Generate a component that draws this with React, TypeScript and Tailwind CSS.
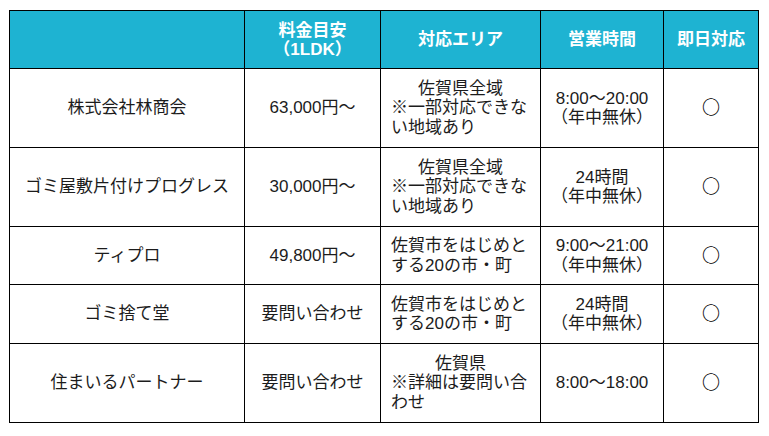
import React from "react";

type Row = {
  name: string;
  price: string;
  area: { head?: string; body: string };
  hours: string[];
  h: string;
};

const rows: Row[] = [
  {
    name: "株式会社林商会",
    price: "63,000円〜",
    area: { head: "佐賀県全域", body: "※一部対応できない地域あり" },
    hours: ["8:00〜20:00", "（年中無休）"],
    h: "h-[79px]",
  },
  {
    name: "ゴミ屋敷片付けプログレス",
    price: "30,000円〜",
    area: { head: "佐賀県全域", body: "※一部対応できない地域あり" },
    hours: ["24時間", "（年中無休）"],
    h: "h-[79px]",
  },
  {
    name: "ティプロ",
    price: "49,800円〜",
    area: { body: "佐賀市をはじめとする20の市・町" },
    hours: ["9:00〜21:00", "（年中無休）"],
    h: "h-[58px]",
  },
  {
    name: "ゴミ捨て堂",
    price: "要問い合わせ",
    area: { body: "佐賀市をはじめとする20の市・町" },
    hours: ["24時間", "（年中無休）"],
    h: "h-[59px]",
  },
  {
    name: "住まいるパートナー",
    price: "要問い合わせ",
    area: { head: "佐賀県", body: "※詳細は要問い合わせ" },
    hours: ["8:00〜18:00"],
    h: "h-[79px]",
  },
];

export default function App() {
  return (
    <div
      className="min-h-[436px] w-[769px] bg-white pl-[9px] pt-[10px]"
      style={{ fontFamily: '"Liberation Sans", "Noto Sans CJK JP", sans-serif' }}
    >
      <table className="w-[749px] table-fixed border-collapse text-[17px] leading-[19.5px] text-[#1c1c1c]">
        <colgroup>
          <col className="w-[235px]" />
          <col className="w-[136px]" />
          <col className="w-[160px]" />
          <col className="w-[123px]" />
          <col className="w-[95px]" />
        </colgroup>
        <thead>
          <tr className="bg-[#1eb3d2] text-white font-bold">
            <th className="h-[58px] border border-black p-0"></th>
            <th className="h-[58px] border border-black px-[8px] py-0 text-center leading-[19px]">
              料金目安
              <br />
              （1LDK）
            </th>
            <th className="h-[58px] border border-black px-[8px] py-0 text-center">対応エリア</th>
            <th className="h-[58px] border border-black px-[8px] py-0 text-center">営業時間</th>
            <th className="h-[58px] border border-black px-[8px] py-0 text-center">即日対応</th>
          </tr>
        </thead>
        <tbody>
          {rows.map((r) => (
            <tr key={r.name}>
              <td className={`${r.h} border border-black px-[8px] py-0 text-center align-middle`}>{r.name}</td>
              <td className={`${r.h} border border-black px-[8px] py-0 text-center align-middle`}>{r.price}</td>
              <td className={`${r.h} border border-black px-[10px] py-0 align-middle`}>
                {r.area.head && <div className="text-center">{r.area.head}</div>}
                <div className="text-left">{r.area.body}</div>
              </td>
              <td className={`${r.h} border border-black px-[6px] py-0 text-center align-middle`}>
                {r.hours.map((t) => (
                  <div key={t}>{t}</div>
                ))}
              </td>
              <td className={`${r.h} border border-black p-0 text-center align-middle`}>
                <span className="font-['Noto_Sans_CJK_JP',sans-serif] text-[18px] font-bold text-black">○</span>
              </td>
            </tr>
          ))}
        </tbody>
      </table>
    </div>
  );
}
